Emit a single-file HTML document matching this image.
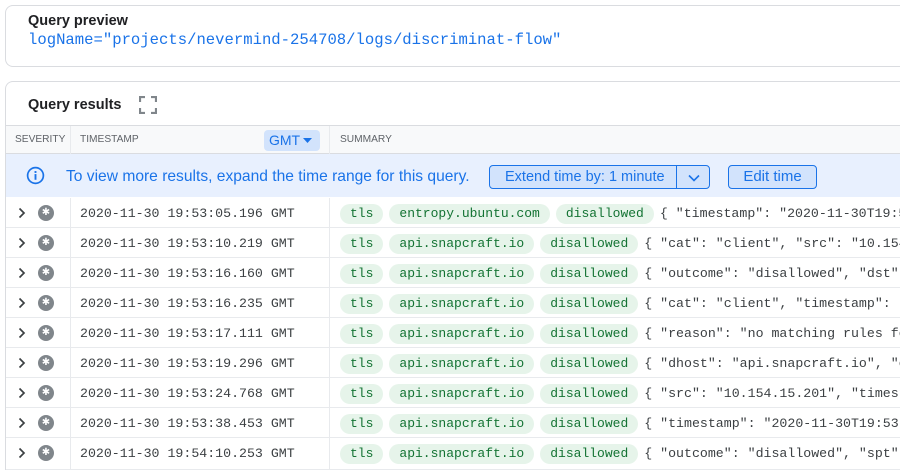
<!DOCTYPE html>
<html><head><style>
*{box-sizing:border-box;margin:0;padding:0}
html,body{width:900px;height:470px;overflow:hidden}
body{background:#fff;font-family:"Liberation Sans",sans-serif;position:relative}
.card{position:absolute;left:5px;width:895px;border:1px solid #dadce0;border-right:none;border-radius:8px 0 0 8px;background:#fff}
.mono{font-family:"Liberation Mono",monospace}
.hdr{position:absolute;left:6px;top:125px;width:894px;height:29px;background:#f8f9fa;border-top:1px solid #dadce0;border-bottom:1px solid #dadce0;font-size:10.2px;color:#5f6368}
.hdr span{position:absolute;top:8px}
.vl{position:absolute;width:1px;background:#e8eaed}
.banner{position:absolute;left:6px;top:154px;width:894px;height:43px;background:#e8f0fe}
.row{position:absolute;left:6px;width:894px;height:30px;border-bottom:1px solid #e8eaed;overflow:hidden}
.chev{position:absolute;left:11px;top:8px}
.sev{position:absolute;left:32px;top:7px;width:16px;height:16px;border-radius:50%;background:#80868b;color:#fff;font-size:10px;line-height:16px;text-align:center}
.ts{position:absolute;left:74px;top:8px;color:#3c4043;white-space:nowrap;font-size:13.25px}
.sum{position:absolute;left:334px;top:6px;white-space:nowrap;color:#3c4043;font-size:13.25px}
.chip{display:inline-block;height:20px;line-height:20px;padding:0 10px;border-radius:10px;background:#e6f4ea;color:#137333;margin-right:6px;font-size:13px}
</style></head><body>
<div class="card" style="top:5px;height:62px">
  <div style="position:absolute;left:22px;top:7px;font-size:14.5px;font-weight:bold;color:#202124">Query preview</div>
  <div class="mono" style="position:absolute;left:22px;top:25px;font-size:15.6px;color:#1a73e8;white-space:nowrap">logName="projects/nevermind-254708/logs/discriminat-flow"</div>
</div>
<div class="card" style="top:81px;height:389px;border-bottom:none;border-radius:8px 0 0 0">
  <div style="position:absolute;left:22px;top:15px;font-size:14.5px;font-weight:bold;color:#202124">Query results</div>
  <svg style="position:absolute;left:133px;top:14px" width="18" height="18" viewBox="0 0 18 18" fill="none" stroke="#80868b" stroke-width="2.2"><path d="M1 6V1h5M12 1h5v5M17 12v5h-5M6 17H1v-5"/></svg>
</div>
<div class="hdr">
  <span style="left:9px">SEVERITY</span>
  <span style="left:74px">TIMESTAMP</span>
  <div style="position:absolute;left:258px;top:4px;width:56px;height:21px;background:#d2e3fc;border-radius:4px;color:#1a73e8;font-size:14px;line-height:21px;padding-left:5px">GMT<svg style="position:absolute;left:39px;top:8px" width="9" height="5" viewBox="0 0 9 5"><path d="M0 0h9L4.5 5z" fill="#1a73e8"/></svg></div>
  <span style="left:334px">SUMMARY</span>
  <div class="vl" style="left:64px;top:0;height:28px"></div>
  <div class="vl" style="left:323px;top:0;height:28px"></div>
</div>
<div class="banner">
  <svg style="position:absolute;left:20px;top:12px" width="19" height="19" viewBox="0 0 20 20"><circle cx="10" cy="10" r="8.3" fill="none" stroke="#1a73e8" stroke-width="1.8"/><rect x="9" y="8.5" width="2" height="6" fill="#1a73e8"/><rect x="9" y="5.3" width="2" height="2" fill="#1a73e8"/></svg>
  <div style="position:absolute;left:60px;top:14px;font-size:15.6px;color:#1a73e8;white-space:nowrap">To view more results, expand the time range for this query.</div>
  <div style="position:absolute;left:483px;top:11px;width:221px;height:24px;border:1px solid #1a73e8;border-radius:4px;background:#d2e3fc;color:#1a73e8;font-size:14.5px;line-height:23px">
    <span style="position:absolute;left:15px">Extend time by: 1 minute</span>
    <div style="position:absolute;left:186px;top:0;width:1px;height:22px;background:#1a73e8"></div>
    <svg style="position:absolute;left:198px;top:8px" width="12" height="8" viewBox="0 0 12 8"><path d="M1 1.5l5 5 5-5" fill="none" stroke="#1a73e8" stroke-width="1.6"/></svg>
  </div>
  <div style="position:absolute;left:722px;top:11px;width:89px;height:24px;border:1px solid #1a73e8;border-radius:4px;background:#d2e3fc;color:#1a73e8;font-size:15px;line-height:22px;text-align:center">Edit time</div>
</div>
<div class="vl" style="left:70px;top:198px;height:272px"></div>
<div class="vl" style="left:329px;top:198px;height:272px"></div>
<div class="row" style="top:198px"><svg class="chev" width="10" height="14" viewBox="0 0 10 14"><path d="M2.5 2.5l4.5 4.5-4.5 4.5" fill="none" stroke="#3c4043" stroke-width="1.7"/></svg><div class="sev">✱</div><div class="ts mono">2020-11-30 19:53:05.196 GMT</div><div class="sum mono"><span class="chip">tls</span><span class="chip">entropy.ubuntu.com</span><span class="chip">disallowed</span>{ "timestamp": "2020-11-30T19:53:05</div></div>
<div class="row" style="top:228px"><svg class="chev" width="10" height="14" viewBox="0 0 10 14"><path d="M2.5 2.5l4.5 4.5-4.5 4.5" fill="none" stroke="#3c4043" stroke-width="1.7"/></svg><div class="sev">✱</div><div class="ts mono">2020-11-30 19:53:10.219 GMT</div><div class="sum mono"><span class="chip">tls</span><span class="chip">api.snapcraft.io</span><span class="chip">disallowed</span>{ "cat": "client", "src": "10.154</div></div>
<div class="row" style="top:258px"><svg class="chev" width="10" height="14" viewBox="0 0 10 14"><path d="M2.5 2.5l4.5 4.5-4.5 4.5" fill="none" stroke="#3c4043" stroke-width="1.7"/></svg><div class="sev">✱</div><div class="ts mono">2020-11-30 19:53:16.160 GMT</div><div class="sum mono"><span class="chip">tls</span><span class="chip">api.snapcraft.io</span><span class="chip">disallowed</span>{ "outcome": "disallowed", "dst" </div></div>
<div class="row" style="top:288px"><svg class="chev" width="10" height="14" viewBox="0 0 10 14"><path d="M2.5 2.5l4.5 4.5-4.5 4.5" fill="none" stroke="#3c4043" stroke-width="1.7"/></svg><div class="sev">✱</div><div class="ts mono">2020-11-30 19:53:16.235 GMT</div><div class="sum mono"><span class="chip">tls</span><span class="chip">api.snapcraft.io</span><span class="chip">disallowed</span>{ "cat": "client", "timestamp": "</div></div>
<div class="row" style="top:318px"><svg class="chev" width="10" height="14" viewBox="0 0 10 14"><path d="M2.5 2.5l4.5 4.5-4.5 4.5" fill="none" stroke="#3c4043" stroke-width="1.7"/></svg><div class="sev">✱</div><div class="ts mono">2020-11-30 19:53:17.111 GMT</div><div class="sum mono"><span class="chip">tls</span><span class="chip">api.snapcraft.io</span><span class="chip">disallowed</span>{ "reason": "no matching rules fo</div></div>
<div class="row" style="top:348px"><svg class="chev" width="10" height="14" viewBox="0 0 10 14"><path d="M2.5 2.5l4.5 4.5-4.5 4.5" fill="none" stroke="#3c4043" stroke-width="1.7"/></svg><div class="sev">✱</div><div class="ts mono">2020-11-30 19:53:19.296 GMT</div><div class="sum mono"><span class="chip">tls</span><span class="chip">api.snapcraft.io</span><span class="chip">disallowed</span>{ "dhost": "api.snapcraft.io", "c</div></div>
<div class="row" style="top:378px"><svg class="chev" width="10" height="14" viewBox="0 0 10 14"><path d="M2.5 2.5l4.5 4.5-4.5 4.5" fill="none" stroke="#3c4043" stroke-width="1.7"/></svg><div class="sev">✱</div><div class="ts mono">2020-11-30 19:53:24.768 GMT</div><div class="sum mono"><span class="chip">tls</span><span class="chip">api.snapcraft.io</span><span class="chip">disallowed</span>{ "src": "10.154.15.201", "timest</div></div>
<div class="row" style="top:408px"><svg class="chev" width="10" height="14" viewBox="0 0 10 14"><path d="M2.5 2.5l4.5 4.5-4.5 4.5" fill="none" stroke="#3c4043" stroke-width="1.7"/></svg><div class="sev">✱</div><div class="ts mono">2020-11-30 19:53:38.453 GMT</div><div class="sum mono"><span class="chip">tls</span><span class="chip">api.snapcraft.io</span><span class="chip">disallowed</span>{ "timestamp": "2020-11-30T19:53</div></div>
<div class="row" style="top:438px;height:32px"><svg class="chev" width="10" height="14" viewBox="0 0 10 14"><path d="M2.5 2.5l4.5 4.5-4.5 4.5" fill="none" stroke="#3c4043" stroke-width="1.7"/></svg><div class="sev">✱</div><div class="ts mono">2020-11-30 19:54:10.253 GMT</div><div class="sum mono"><span class="chip">tls</span><span class="chip">api.snapcraft.io</span><span class="chip">disallowed</span>{ "outcome": "disallowed", "spt" </div></div>
</body></html>
